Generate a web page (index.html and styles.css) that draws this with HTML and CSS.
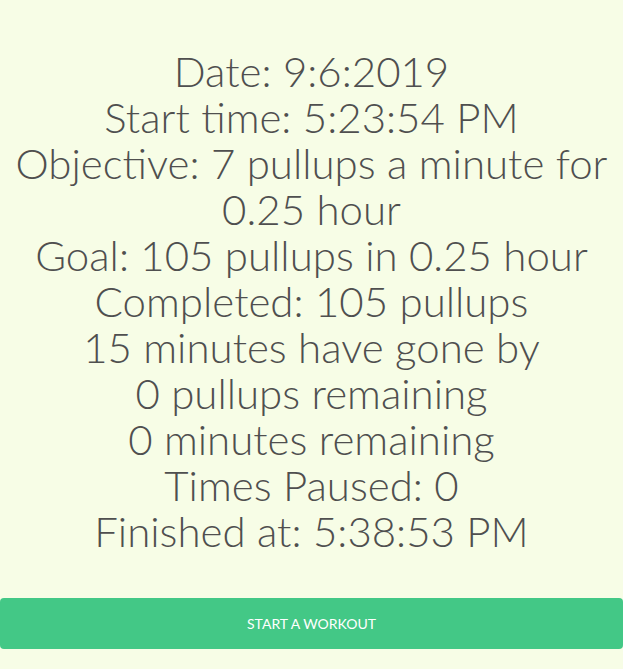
FILE: index.html
```html
<!DOCTYPE html>
<html>
<head>
<meta charset="utf-8">
<link rel="stylesheet" href="styles.css">
</head>
<body>
<main class="page">
  <section class="summary">
    <p>Date: 9:6:2019</p>
    <p>Start time: 5:23:54 PM</p>
    <p>Objective: 7 pullups a minute for 0.25 hour</p>
    <p>Goal: 105 pullups in 0.25 hour</p>
    <p>Completed: 105 pullups</p>
    <p>15 minutes have gone by</p>
    <p>0 pullups remaining</p>
    <p>0 minutes remaining</p>
    <p>Times Paused: 0</p>
    <p>Finished at: 5:38:53 PM</p>
  </section>
  <button class="start-btn">START A WORKOUT</button>
</main>
</body>
</html>
```
FILE: styles.css
```css
html, body {
  margin: 0;
  padding: 0;
  background: #f7fde6;
}
.page {
  display: flex;
  flex-direction: column;
  padding-top: 48px;
  font-family: Lato, "Open Sans", sans-serif;
}
.summary {
  text-align: center;
  color: #4f4f4f;
  font-size: 42px;
  font-weight: 300;
  line-height: 46px;
  padding: 0 8px;
}
.summary p {
  margin: 0;
}
.start-btn {
  margin-top: 44px;
  height: 51px;
  width: 623px;
  border: none;
  border-radius: 4px;
  background: #43c886;
  color: #ffffff;
  font-family: Lato, sans-serif;
  font-size: 14px;
  font-weight: 400;
}
```
